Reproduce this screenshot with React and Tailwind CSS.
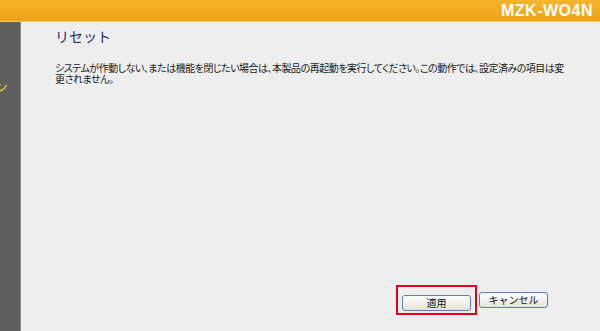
export default function App() {
  const jp = { fontFamily: '"Noto Sans CJK JP", "Liberation Sans", sans-serif' };

  return (
    <div className="w-[600px] h-[331px] flex flex-col overflow-hidden bg-[#eeeeee]" style={jp}>
      {/* header bar */}
      <div className="h-[22px] shrink-0 flex items-center justify-end pr-[7px] bg-gradient-to-b from-[#f6b52c] to-[#efa112] border-b border-[#f4c870]">
        <span className="text-white font-bold text-[16px] leading-none tracking-[0.5px]" style={{ fontFamily: '"Liberation Sans", Arial, sans-serif' }}>
          MZK-WO4N
        </span>
      </div>

      <div className="flex flex-1 min-h-0">
        {/* left menu strip */}
        <div className="w-[21px] shrink-0 bg-[#5e5e5e] border-r border-[#8a8a8a] overflow-hidden relative">
          <span className="absolute left-[-6px] top-[57px] text-[14px] leading-none text-[#cfd21c]">ン</span>
        </div>

        {/* content */}
        <div className="flex-1 flex flex-col pl-[34px] pr-[32px]">
          <h1 className="mt-[5px] text-[14px] leading-[18px] text-[#2a2a6e] font-normal">リセット</h1>
          <p className="mt-[17px] text-[10px] leading-[11px] tracking-[-0.5px] text-[#1a1a1a] [font-feature-settings:'palt']">
            システムが作動しない、または機能を閉じたい場合は、本製品の再起動を実行してください。この動作では、設定済みの項目は変更されません。
          </p>

          <div className="mt-auto mb-[16px] flex items-center justify-end pr-[20px] gap-[2px]">
            <div className="border-2 border-[#e0001b] px-[4px] py-[1px]">
              <button className="w-[69px] h-[16px] rounded-[3px] border border-[#5a7eb8] bg-gradient-to-b from-white to-[#e4e4dc] text-[10px] leading-none text-[#111]">
                適用
              </button>
            </div>
            <button className="w-[69px] h-[16px] rounded-[3px] border border-[#5a7eb8] bg-gradient-to-b from-white to-[#e4e4dc] text-[10px] leading-none text-[#111]">
              キャンセル
            </button>
          </div>
        </div>
      </div>
    </div>
  );
}
